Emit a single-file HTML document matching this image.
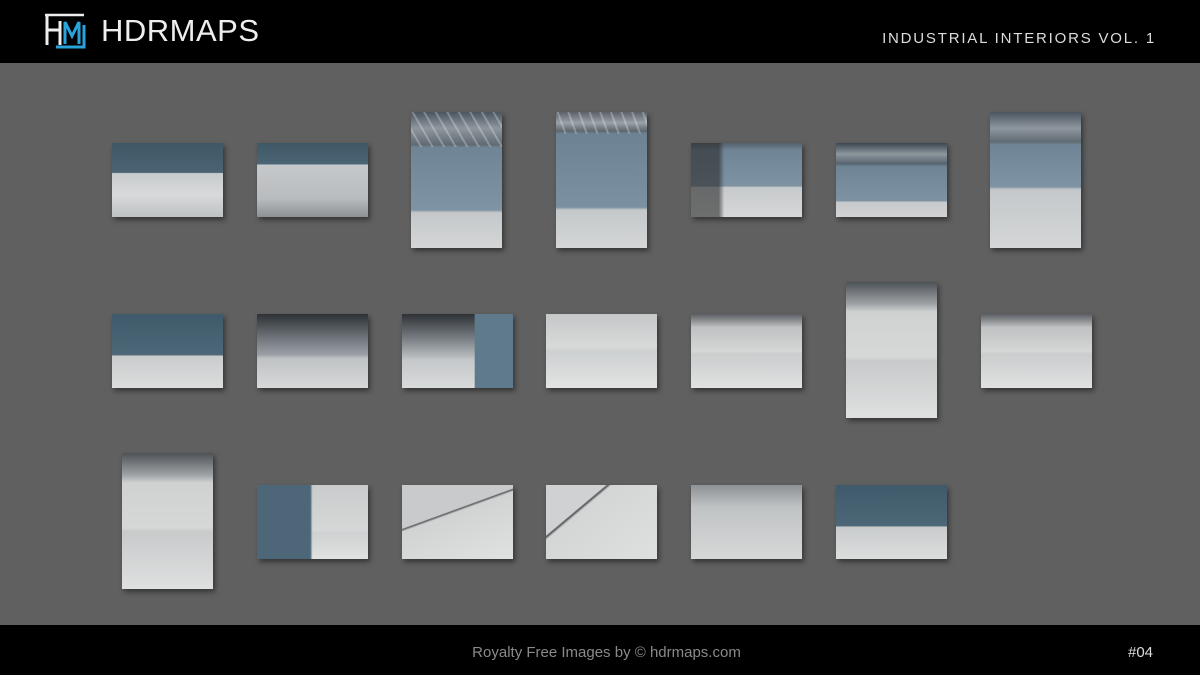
<!DOCTYPE html><html><head><meta charset="utf-8"><style>
*{margin:0;padding:0;box-sizing:border-box}
body{width:1200px;height:675px;background:#606060;position:relative;overflow:hidden;font-family:"Liberation Sans",sans-serif}
.hd{position:absolute;left:0;top:0;width:1200px;height:63px;background:#000}
.ft{position:absolute;left:0;top:625px;width:1200px;height:50px;background:#000}
.t{position:absolute;box-shadow:2px 3px 5px rgba(0,0,0,.45)}
.L{width:111px;height:74px}.P{width:91px;height:136px}
.A{background:linear-gradient(#3f5866 0%,#4a6474 40%,#c9ccce 41%,#d7d9da 70%,#bfc2c4 100%)}
.A2{background:linear-gradient(#3f5866 0%,#4a6474 28%,#c6c9cb 30%,#b9bcbe 75%,#8d9194 100%)}
.B{background:repeating-linear-gradient(60deg,transparent 0 8px,rgba(255,255,255,.25) 8px 10px) 0 0/100% 26% no-repeat,linear-gradient(#4b5560 0%,#8f979e 12%,#606a72 24%,#6f8596 26%,#7e93a3 72%,#c4c8ca 74%,#d4d6d7 100%)}
.B2{background:repeating-linear-gradient(70deg,transparent 0 8px,rgba(255,255,255,.25) 8px 10px) 0 0/100% 16% no-repeat,linear-gradient(#5a6168 0%,#9aa2a8 8%,#5e666e 14%,#6d8394 16%,#7b91a2 70%,#c4c8ca 72%,#d4d6d7 100%)}
.C{background:linear-gradient(90deg,rgba(40,40,40,.6) 0 25%,transparent 30%),linear-gradient(#55606a 0%,#6f8596 10%,#7d92a2 58%,#c7cacc 60%,#d5d7d8 100%)}
.D{background:linear-gradient(#3c4650 0%,#8e969d 15%,#576470 28%,#6f8596 32%,#7d92a2 78%,#c7cacc 80%,#d0d2d3 100%)}
.E{background:linear-gradient(#4b5560 0%,#8f979e 12%,#606a72 22%,#6f8596 24%,#7e93a3 55%,#c4c8ca 57%,#d4d6d7 100%)}
.F{background:linear-gradient(#3f5a6a 0%,#4d6778 55%,#c9cccd 57%,#dcdddd 100%)}
.G{background:linear-gradient(#2e3236 0%,#6a7075 30%,#9aa0a5 55%,#c0c3c5 60%,#d6d8d9 100%)}
.H{background:linear-gradient(90deg,transparent 65%,#5f7a8c 66%),linear-gradient(#2e3236 0%,#7d8388 35%,#b8bcbf 58%,#c5c8ca 62%,#d8dadb 100%)}
.W{background:linear-gradient(#c5c7c8 0%,#d8d9d9 45%,#cdd0d1 50%,#e2e3e3 100%)}
.W2{background:linear-gradient(#5a5e62 0%,#bfc1c2 18%,#d5d6d6 50%,#cbcdce 55%,#e0e1e1 100%)}
.WP{background:linear-gradient(#4d5257 0%,#9ea2a5 16%,#d0d2d2 22%,#d6d7d7 55%,#c8cacb 58%,#dfe0e0 100%)}
.TL{background:linear-gradient(160deg,#c8cacb 0 38%,#5a5e62 39%,#d1d3d3 41%,#e0e1e1 100%)}
.TL2{background:linear-gradient(140deg,#cfd1d2 0 30%,#4c5054 31%,#d4d6d6 33%,#dedfdf 100%)}
.FL{background:linear-gradient(#8e9295 0%,#c0c3c4 30%,#d6d8d8 100%)}
</style></head><body>
<div class="hd">
<svg style="position:absolute;left:44px;top:13px" width="42" height="36" viewBox="0 0 42 36"><path d="M1 2H40" stroke="#eee" stroke-width="2.5" fill="none"/><path d="M3 2V32M3 17H17M16 8V32" stroke="#eee" stroke-width="3" fill="none"/><path d="M21 31V9L28 23L35 9V31" stroke="#2aa3dc" stroke-width="3" fill="none"/><path d="M12 34H40V12" stroke="#2aa3dc" stroke-width="3" fill="none"/></svg>
<div style="position:absolute;left:101px;top:13px;color:#eee;font-size:31px;letter-spacing:0.5px">HDRMAPS</div>
<div style="position:absolute;right:44px;top:30px;color:#ddd;font-size:15px;letter-spacing:1.8px">INDUSTRIAL INTERIORS VOL. 1</div>
</div>
<div class="t L A" style="left:112px;top:143px"></div>
<div class="t L A2" style="left:257px;top:143px"></div>
<div class="t P B" style="left:411px;top:112px"></div>
<div class="t P B2" style="left:556px;top:112px"></div>
<div class="t L C" style="left:691px;top:143px"></div>
<div class="t L D" style="left:836px;top:143px"></div>
<div class="t P E" style="left:990px;top:112px"></div>

<div class="t L F" style="left:112px;top:314px"></div>
<div class="t L G" style="left:257px;top:314px"></div>
<div class="t L H" style="left:402px;top:314px"></div>
<div class="t L W" style="left:546px;top:314px"></div>
<div class="t L W2" style="left:691px;top:314px"></div>
<div class="t P WP" style="left:846px;top:282px"></div>
<div class="t L W2" style="left:981px;top:314px"></div>

<div class="t P WP" style="left:122px;top:453px"></div>
<div class="t L" style="left:257px;top:485px;background:linear-gradient(90deg,#4d6778 0 48%,transparent 50%),linear-gradient(#c9cbcc 0%,#d6d7d7 62%,#cfd1d2 64%,#e0e1e1 100%)"></div>
<div class="t L TL" style="left:402px;top:485px"></div>
<div class="t L TL2" style="left:546px;top:485px"></div>
<div class="t L FL" style="left:691px;top:485px"></div>
<div class="t L F" style="left:836px;top:485px"></div>

<div class="ft">
<div style="position:absolute;left:0;width:1213px;text-align:center;top:19px;color:#8a8a8a;font-size:15px">Royalty Free Images by © hdrmaps.com</div>
<div style="position:absolute;left:1128px;top:19px;color:#ddd;font-size:15px">#04</div>
</div>
</body></html>
